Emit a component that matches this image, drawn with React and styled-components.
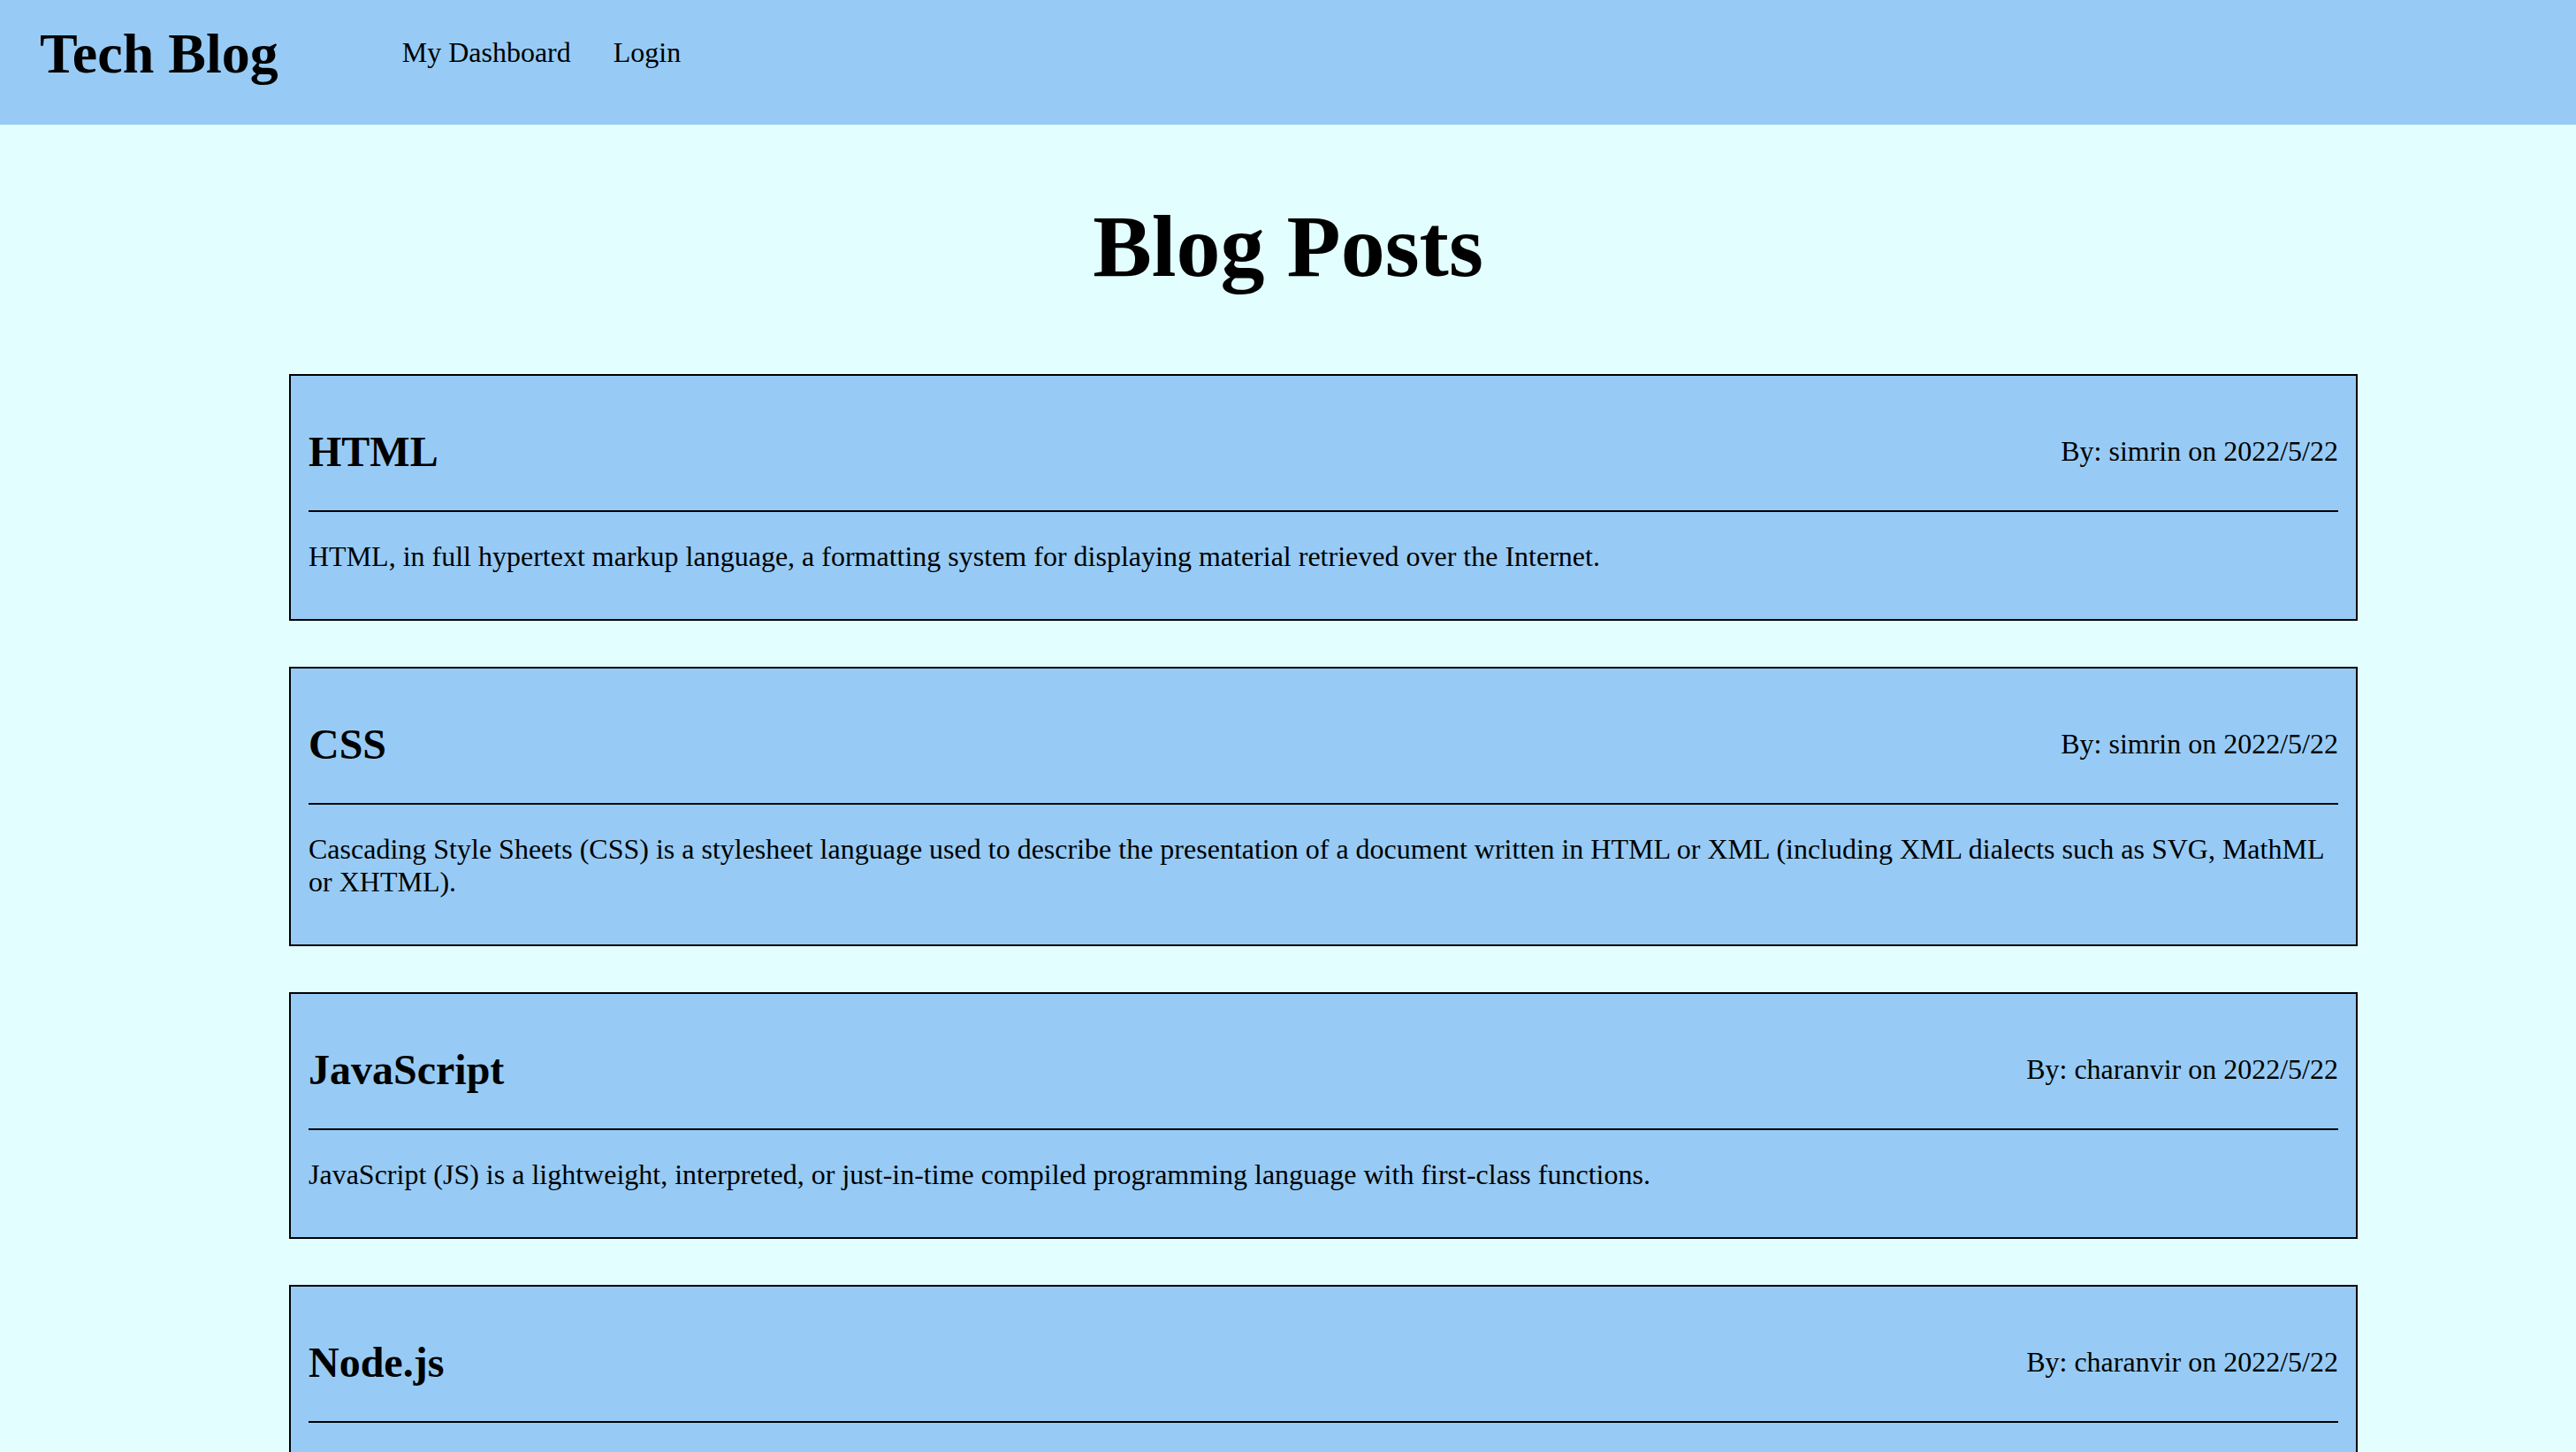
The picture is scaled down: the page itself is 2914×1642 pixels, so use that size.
import React from 'react';
import styled, { createGlobalStyle } from 'styled-components';

const GlobalStyle = createGlobalStyle`
  html, body {
    margin: 0;
    padding: 0;
    background: #e2feff;
    color: #000;
    font-family: "Liberation Serif", "Times New Roman", serif;
  }
`;

const Header = styled.header`
  display: flex;
  align-items: center;
  gap: 140px;
  height: 141px;
  box-sizing: border-box;
  padding: 24px 0 43px 45px;
  background: #97cbf5;
`;

const SiteTitle = styled.h1`
  margin: 0;
  font-size: 64px;
  font-weight: bold;
  line-height: normal;
`;

const Nav = styled.nav`
  display: flex;
  gap: 48px;
  padding-bottom: 3px;
`;

const NavLink = styled.a`
  color: #000;
  text-decoration: none;
  font-size: 32px;
  cursor: pointer;
`;

const PageTitle = styled.h1`
  margin: 80px 0 87px;
  text-align: center;
  font-size: 100px;
  font-weight: bold;
  line-height: normal;
`;

const PostList = styled.section`
  display: flex;
  flex-direction: column;
  gap: 52px;
  margin: 0 247px 0 327px;
`;

const Card = styled.article`
  background: #97cbf5;
  border: 2px solid #000;
  padding: 18px 20px 20px;
`;

const CardHead = styled.div`
  display: flex;
  justify-content: space-between;
  align-items: center;
`;

const PostTitle = styled.h2`
  margin: 40px 0 39px;
  font-size: 48px;
  font-weight: bold;
  line-height: normal;
`;

const Byline = styled.span`
  font-size: 32px;
`;

const Rule = styled.hr`
  margin: 0;
  border: 0;
  border-top: 2px solid #000;
`;

const Body = styled.p`
  margin: 32px 0;
  font-size: 32px;
  line-height: normal;
`;

const posts = [
  {
    id: 1,
    title: 'HTML',
    author: 'simrin',
    date: '2022/5/22',
    body: 'HTML, in full hypertext markup language, a formatting system for displaying material retrieved over the Internet.',
  },
  {
    id: 2,
    title: 'CSS',
    author: 'simrin',
    date: '2022/5/22',
    body: 'Cascading Style Sheets (CSS) is a stylesheet language used to describe the presentation of a document written in HTML or XML (including XML dialects such as SVG, MathML or XHTML).',
  },
  {
    id: 3,
    title: 'JavaScript',
    author: 'charanvir',
    date: '2022/5/22',
    body: 'JavaScript (JS) is a lightweight, interpreted, or just-in-time compiled programming language with first-class functions.',
  },
  {
    id: 4,
    title: 'Node.js',
    author: 'charanvir',
    date: '2022/5/22',
    body: 'Node.js is an open-source, cross-platform JavaScript runtime environment that executes JavaScript code outside a web browser.',
  },
];

function PostCard({ post }) {
  return (
    <Card>
      <CardHead>
        <PostTitle>{post.title}</PostTitle>
        <Byline>
          By: {post.author} on {post.date}
        </Byline>
      </CardHead>
      <Rule />
      <Body>{post.body}</Body>
    </Card>
  );
}

export default function App() {
  return (
    <>
      <GlobalStyle />
      <Header>
        <SiteTitle>Tech Blog</SiteTitle>
        <Nav>
          <NavLink>My Dashboard</NavLink>
          <NavLink>Login</NavLink>
        </Nav>
      </Header>
      <main>
        <PageTitle>Blog Posts</PageTitle>
        <PostList>
          {posts.map((post) => (
            <PostCard key={post.id} post={post} />
          ))}
        </PostList>
      </main>
    </>
  );
}
